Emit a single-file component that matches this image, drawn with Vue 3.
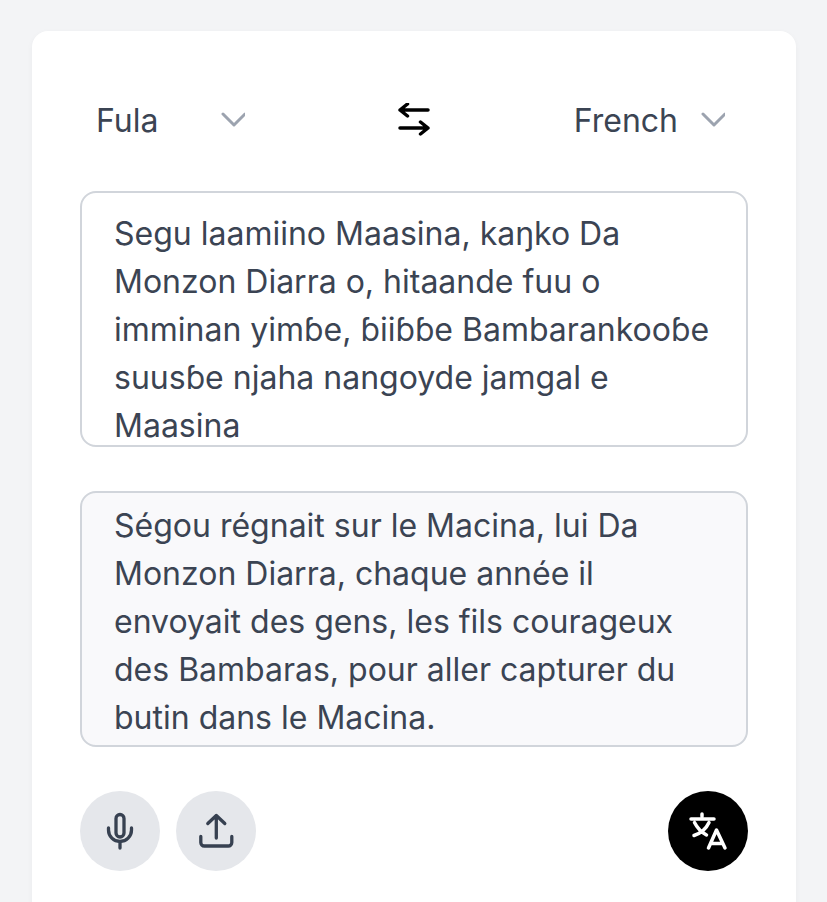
<template>
  <div class="page">
    <main class="card">
      <div class="lang-bar">
        <button class="lang-select fula" type="button">
          <span>Fula</span>
          <svg class="chevron" viewBox="0 0 24 24" aria-hidden="true"><path d="M2 2l11 11L24 2" /></svg>
        </button>
        <button class="swap" type="button" aria-label="Swap languages">
          <svg viewBox="0 0 32 34" aria-hidden="true">
            <path d="M30 7H2M9.500 1 2 7l7.500 6" />
            <path d="M2 25H30M22.500 19l7.500 6-7.500 6" />
          </svg>
        </button>
        <button class="lang-select french" type="button">
          <span>French</span>
          <svg class="chevron" viewBox="0 0 24 24" aria-hidden="true"><path d="M2 2l11 11L24 2" /></svg>
        </button>
      </div>

      <div class="text-box source">{{ source }}</div>
      <div class="text-box target">{{ target }}</div>

      <div class="actions">
        <div class="left-actions">
          <button class="round" type="button" aria-label="Record">
            <svg viewBox="0 0 40 40" aria-hidden="true">
              <path d="M20 3.500a4 4 0 0 0-4 4v14.500a4 4 0 0 0 8 0V7.500a4 4 0 0 0-4-4Z" />
              <path d="M8.500 17v2a11.500 11.500 0 0 0 23 0v-2M20 30.500v6.500" />
            </svg>
          </button>
          <button class="round" type="button" aria-label="Upload">
            <svg viewBox="0 0 40 40" aria-hidden="true">
              <path d="M20.300 27V4.500M11.800 12.500l8.500-8 8.500 8" />
              <path d="M4.800 25.500v6A3.500 3.500 0 0 0 8.300 35h24a3.500 3.500 0 0 0 3.500-3.500v-6" />
            </svg>
          </button>
        </div>
        <button class="round translate" type="button" aria-label="Translate">
          <svg viewBox="0 0 40 40" aria-hidden="true">
            <path d="M3 8h23M14 3v2.500M6.500 11.500c2.500 5 6.500 9.500 12 12.500M21 11.500c-2.500 5.500-7.500 10.500-15 13" />
            <path d="M20.500 37 28.500 19l8.500 18M23.500 32.500h11" />
          </svg>
        </button>
      </div>
    </main>
  </div>
</template>

<script setup>
const source = 'Segu laamiino Maasina, kaŋko Da Monzon Diarra o, hitaande fuu o imminan yimɓe, ɓiiɓɓe Bambarankooɓe suusɓe njaha nangoyde jamgal e Maasina'
const target = 'Ségou régnait sur le Macina, lui Da Monzon Diarra, chaque année il envoyait des gens, les fils courageux des Bambaras, pour aller capturer du butin dans le Macina.'
</script>

<style scoped>
.page {
  box-sizing: border-box;
  height: 902px;
  overflow: hidden;
  padding: 31px 31px 0 32px;
  background: #f3f4f6;
  font-family: Inter, "Noto Sans", sans-serif;
  color: #3b4453;
}

.card {
  box-sizing: border-box;
  height: 900px;
  padding: 64px 48px 0;
  background: #fff;
  border-radius: 16px;
  box-shadow: 0 2px 6px rgba(0, 0, 0, 0.04);
}

.lang-bar {
  display: flex;
  align-items: center;
  justify-content: space-between;
  height: 50px;
  margin-bottom: 46px;
}

.lang-select {
  display: flex;
  align-items: center;
  padding: 0;
  border: 0;
  background: none;
  font: inherit;
  font-size: 32px;
  color: #3b4453;
}
.fula {
  margin-left: 16px;
}
.french {
  margin-right: 23px;
}
.fula span {
  width: 125px;
  text-align: left;
}
.french span {
  margin-right: 23px;
}
.chevron {
  width: 24px;
  height: 24px;
  margin-top: -3px;
  fill: none;
  stroke: #9ca3af;
  stroke-width: 3;
  stroke-linecap: round;
  stroke-linejoin: round;
}
.chevron path {
  transform: translateY(5px);
}

.swap {
  display: flex;
  padding: 0;
  margin-left: 10px;
  border: 0;
  background: none;
}
.swap svg {
  width: 32px;
  height: 34px;
  fill: none;
  stroke: #000;
  stroke-width: 3.500;
  stroke-linecap: round;
  stroke-linejoin: round;
}

.text-box {
  box-sizing: border-box;
  height: 256px;
  overflow: hidden;
  padding: 17px 33px 0 32px;
  border: 2px solid #d1d5db;
  border-radius: 16px;
  font-size: 32px;
  line-height: 48px;
  color: #3b4453;
}
.target {
  margin-top: 44px;
  padding-top: 9px;
  background: #f9f9fb;
}

.actions {
  display: flex;
  justify-content: space-between;
  margin-top: 44px;
}
.left-actions {
  display: flex;
  gap: 16px;
}
.round {
  display: flex;
  align-items: center;
  justify-content: center;
  width: 80px;
  height: 80px;
  padding: 0;
  border: 0;
  border-radius: 50%;
  background: #e5e7eb;
}
.round svg {
  width: 40px;
  height: 40px;
  fill: none;
  stroke: #374151;
  stroke-width: 3.300;
  stroke-linecap: round;
  stroke-linejoin: round;
}
.translate {
  background: #000;
}
.translate svg {
  stroke: #fff;
  stroke-width: 3.500;
}
</style>
